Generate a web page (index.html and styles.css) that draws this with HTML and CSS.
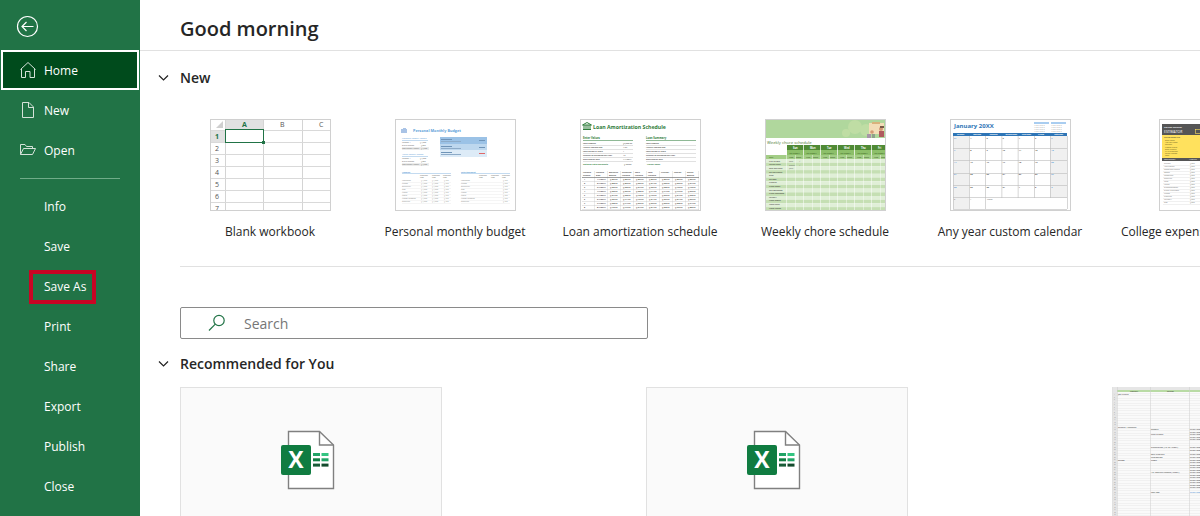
FILE: index.html
```
<!DOCTYPE html>
<html lang="en">
<head>
  <meta charset="UTF-8">
  <meta name="viewport" content="width=device-width, initial-scale=1.0">
  <title>Home</title>
  <link rel="stylesheet" href="styles.css">
</head>
<body>
  <nav class="sidebar">
    <button class="back" aria-label="Back">
      <svg width="22" height="22" viewBox="0 0 22 22" fill="none" stroke="#fff" stroke-width="1.2">
        <circle cx="11.5" cy="11.5" r="10"/>
        <path d="M17.5 11.5H6M10.5 7L6 11.5L10.5 16"/>
      </svg>
    </button>
    <button class="nav-item active">
      <svg width="16" height="18" viewBox="0 0 16 18" fill="none" stroke="#d5e2d9">
        <path d="M.5 8.5L8 1.5L15.5 8.5M1.5 8V16.5H5.5V10.5H10V16.5H14.5V8"/>
      </svg>
      Home
    </button>
    <button class="nav-item">
      <svg width="16" height="18" viewBox="0 0 16 18" fill="none" stroke="#d5e2d9">
        <path d="M2.5 1.5H9L13.5 6V16.5H2.5ZM8.5 1.5V6.5H13.5"/>
      </svg>
      New
    </button>
    <button class="nav-item">
      <svg width="16" height="18" viewBox="0 0 16 18" fill="none" stroke="#d5e2d9">
        <path d="M.5 13.5V3.5H5L6.5 5.5H12.5V7.5M.5 13.5L3.5 7.5H15.5L12.5 13.5Z"/>
      </svg>
      Open
    </button>
    <hr class="nav-line">
    <button class="nav-item text-only">Info</button>
    <button class="nav-item text-only">Save</button>
    <button class="nav-item text-only marked">Save As</button>
    <button class="nav-item text-only">Print</button>
    <button class="nav-item text-only">Share</button>
    <button class="nav-item text-only">Export</button>
    <button class="nav-item text-only">Publish</button>
    <button class="nav-item text-only">Close</button>
  </nav>

  <main class="content">
    <header class="top">
      <h1>Good morning</h1>
    </header>

    <section class="new-section">
      <h2>
        <svg width="12" height="8" viewBox="0 0 12 8" fill="none" stroke="#222" stroke-width="1.2"><path d="M1 1.5L5.5 6L10 1.5"/></svg>
        New
      </h2>
      <div class="templates">
        <a class="template" href="#"><svg class="thumb" id="blank" viewBox="0 0 121 92"></svg>Blank workbook</a>
        <a class="template" href="#"><svg class="thumb" id="budget" viewBox="0 0 121 92"></svg>Personal monthly budget</a>
        <a class="template" href="#"><svg class="thumb" id="loan" viewBox="0 0 121 92"></svg>Loan amortization schedule</a>
        <a class="template" href="#"><svg class="thumb" id="chore" viewBox="0 0 121 92"></svg>Weekly chore schedule</a>
        <a class="template" href="#"><svg class="thumb" id="calendar" viewBox="0 0 121 92"></svg>Any year custom calendar</a>
        <a class="template" href="#"><svg class="thumb" id="college" viewBox="0 0 121 92"></svg>College expense estimator</a>
      </div>
    </section>

    <label class="search">
      <svg width="18" height="18" viewBox="0 0 18 18" fill="none" stroke="#217346" stroke-width="1.2">
        <circle cx="11" cy="6.5" r="5.2"/>
        <path d="M7.3 10.2L1 16.5"/>
      </svg>
      <input type="text" placeholder="Search" aria-label="Search">
    </label>

    <section class="recommended">
      <h2>
        <svg width="12" height="8" viewBox="0 0 12 8" fill="none" stroke="#222" stroke-width="1.2"><path d="M1 1.5L5.5 6L10 1.5"/></svg>
        Recommended for You
      </h2>
      <div class="cards">
        <a class="card" href="#" aria-label="Workbook">
          <svg class="file-icon" width="54" height="60" viewBox="0 0 54 60"></svg>
        </a>
        <a class="card" href="#" aria-label="Workbook">
          <svg class="file-icon" width="54" height="60" viewBox="0 0 54 60"></svg>
        </a>
        <a class="card" href="#" aria-label="Workbook preview">
          <svg class="sheet" id="sheet" viewBox="0 0 260 146"></svg>
        </a>
      </div>
    </section>
  </main>

  <script src="script.js"></script>
</body>
</html>
```
FILE: styles.css
```
* {
  box-sizing: border-box;
}
body {
  margin: 0;
  height: 100vh;
  display: flex;
  overflow: hidden;
  background: #fff;
  color: #262626;
  font-family: "Open Sans", "Noto Sans", sans-serif;
  font-size: 12px;
}
button {
  border: 0;
  background: none;
  color: inherit;
  font: inherit;
}
a {
  color: inherit;
  text-decoration: none;
}

/* sidebar */
.sidebar {
  flex: 0 0 140px;
  background: #217346;
  color: #fff;
}
.back {
  display: flex;
  height: 50px;
  padding: 15px 16px;
}
.back svg {
  overflow: visible;
}
.nav-item {
  display: flex;
  align-items: center;
  gap: 8px;
  width: 100%;
  height: 40px;
  padding: 0 20px;
  position: relative;
}
.nav-item.active {
  width: calc(100% - 2px);
  margin: 0 1px;
  padding: 0 17px;
  border: 2px solid #fff;
  background: #004b1c;
}
.nav-item.text-only {
  padding-left: 44px;
}
.marked::after {
  content: "";
  box-sizing: border-box;
  position: absolute;
  left: 29px;
  top: 4px;
  width: 67px;
  height: 34px;
  border: 4px solid #c90524;
}
.nav-line {
  height: 1px;
  margin: 8px 20px 7px;
  border: 0;
  background: #70ac88;
}

/* main area */
.content {
  flex: 1;
  min-width: 0;
  overflow: hidden;
}
.top {
  height: 51px;
  padding-left: 40px;
  display: flex;
  align-items: center;
  border-bottom: 1px solid #e1e1e1;
}
h1 {
  margin: 0;
  padding-top: 8px;
  font-size: 20px;
  line-height: 28px;
  font-weight: 600;
}
h2 {
  display: flex;
  align-items: center;
  gap: 10px;
  margin: 0 0 0 -22px;
  font-size: 14px;
  line-height: 20px;
  font-weight: 600;
}
.new-section {
  margin-left: 40px;
  padding: 17px 0 26px;
  border-bottom: 1px solid #e1e1e1;
}
.templates {
  display: flex;
  gap: 5px;
  margin-top: 31px;
}
.template {
  flex: 0 0 180px;
  display: flex;
  flex-direction: column;
  align-items: center;
  gap: 13px;
  line-height: 16px;
  white-space: nowrap;
}
.thumb {
  width: 121px;
  height: 92px;
}
.search {
  display: flex;
  align-items: center;
  gap: 18px;
  width: 468px;
  max-width: 90%;
  height: 32px;
  margin: 40px 0 15px 40px;
  padding-left: 27px;
  border: 1px solid #8a8a8a;
  border-radius: 2px;
}
.search input {
  flex: 1;
  border: 0;
  outline: 0;
  padding: 0;
  background: none;
  font: inherit;
  font-size: 14px;
}
.search input::placeholder {
  color: #767676;
}
.recommended {
  margin-left: 40px;
}
.cards {
  display: flex;
  gap: 204px;
  margin-top: 13px;
}
.card {
  flex: 0 0 262px;
  height: 146px;
  display: flex;
  align-items: center;
  justify-content: center;
  border: 1px solid #e1e1e1;
  background: #fafafa;
}
.file-icon {
  margin-right: 6px;
}
.sheet {
  width: 260px;
  height: 146px;
}
```
FILE: script.js
```
const rect = (x, y, w, h, fill) =>
  `<rect x="${x}" y="${y}" width="${w}" height="${h}" fill="${fill}"/>`;

const text = (x, y, size, str, fill = '#666', weight = 400) =>
  `<text x="${x}" y="${y}" font-size="${size}" fill="${fill}" font-weight="${weight}">${str}</text>`;

const frame = '<rect x=".5" y=".5" width="120" height="91" fill="none" stroke="#d0d0d0"/>';

function draw(id, parts) {
  document.getElementById(id).innerHTML = parts.join('');
}

// Blank workbook
function blank() {
  const p = [rect(0, 0, 121, 92, '#fff'), rect(15, 0, 39, 11, '#e1e1e1'), rect(0, 11, 15, 12, '#e1e1e1')];
  p.push('<path d="M13 2V9H6Z" fill="#cfcfcf"/>');
  [15, 53, 92].forEach(x => p.push(rect(x, 0, 1, 92, '#d4d4d4')));
  for (let i = 0; i < 7; i++) {
    p.push(rect(0, 11 + i * 12, 121, 1, '#d9d9d9'));
    p.push(text(5, 20 + i * 12, 7, i + 1, i ? '#555' : '#217346', i ? 400 : 700));
  }
  p.push(text(32, 8, 7, 'A', '#217346', 700), text(70, 8, 7, 'B', '#555'), text(109, 8, 7, 'C', '#555'));
  p.push('<rect x="15.5" y="10.5" width="38" height="13" fill="#fff" stroke="#217346"/>', rect(52, 22, 3, 3, '#217346'));
  p.push(frame);
  draw('blank', p);
}

// Personal monthly budget
function budget() {
  const p = [rect(0, 0, 121, 92, '#fff'), rect(6, 10, 6, 4, '#a9c3e6'), rect(8, 9, 3, 1, '#a9c3e6')];
  p.push(text(18, 13, 3.8, 'Personal Monthly Budget', '#5f9fd8', 700));
  p.push(rect(45, 18, 47, 7, '#9bc2e6'), rect(45, 25, 47, 6, '#bdd7ee'), rect(45, 31, 47, 7, '#ddebf7'));
  [20, 27, 33].forEach((y, i) => {
    p.push(rect(46, y, 11, 1, '#6f94b8'), rect(46, y + 2, 20, 1, '#8dabc8'));
    p.push(rect(84, y + 1, 6, 1, i === 2 ? '#e06868' : '#6f94b8'));
  });
  [[19, 'Projected Monthly Income'], [35, 'Actual Monthly Income']].forEach(([y, str]) => {
    p.push(text(7, y + 1, 2, str, '#5b9bd5'), rect(7, y + 2, 26, 1, '#c4dbf0'));
    p.push(text(7, y + 5, 2, 'Income 1'), text(25, y + 5, 2, '$4,300'));
    p.push(text(7, y + 8, 2, 'Extra income'), text(26, y + 8, 2, '$300'));
    p.push(rect(7, y + 9, 27, 3, '#ececec'), text(7, y + 11, 1.7, 'Total monthly income'), text(26, y + 11, 2, '$4,600'));
  });
  [[7, 'Housing'], [66, 'Entertainment']].forEach(([x, str]) => {
    p.push(text(x, 54, 2, str, '#5b9bd5', 700), rect(x, 54, 49, 1, '#c4dbf0'));
    [18, 30, 41].forEach(dx => p.push(text(x + dx, 57, 1.8, 'Projected'), text(x + dx, 59, 1.8, 'Cost')));
    for (let i = 0; i < 8; i++) {
      const y = 62 + i * 3;
      p.push(rect(x, y + 1, 49, .3, '#ddd'));
      p.push(text(x, y, 2, ['Mortgage', 'Phone', 'Electricity', 'Gas', 'Water', 'Cable', 'Waste removal', 'Supplies'][i], '#888'));
      if (x < 60) p.push(text(x + 19, y, 2, '$1,000', '#999'), text(x + 30, y, 2, '$1,000', '#999'));
      p.push(text(x + 42, y, 2, '$100', '#999'));
    }
  });
  p.push(frame);
  draw('budget', p);
}

// Loan amortization schedule
function loan() {
  const green = '#2f7d3b';
  const p = [rect(0, 0, 121, 92, '#fff')];
  p.push('<path d="M2.5 6L7 3.5L11.5 6ZM3 10.5H11M4 6V10M6 6V10M8 6V10M10 6V10" fill="none" stroke="#2f7d3b"/>');
  p.push(text(13, 10, 5.2, 'Loan Amortization Schedule', green, 700));
  [[3, 'Enter Values'], [66, 'Loan Summary']].forEach(([x, str]) => {
    p.push(text(x, 20, 2.7, str, green, 700), rect(x, 21, 50, 1, '#8fb996'));
    ['Loan amount', 'Annual interest rate', 'Loan period in years', 'Number of payments per year', 'Start date of loan'].forEach((row, i) => {
      p.push(text(x, 25 + i * 4, 2, row, '#333', 600), rect(x, 26 + i * 4, 50, .3, '#999'));
      if (x < 60) p.push(text(x + 40, 25 + i * 4, 2, ['$5,000.00', '4.5%', '1', '12', '1/1/20XX'][i], '#333'));
    });
  });
  p.push(text(3, 46, 2, 'Optional extra payments', green, 700), text(44, 46, 2, '$100.00', '#333'));
  p.push(text(67, 46, 2, 'Lender name', green, 700));
  for (let c = 0; c < 9; c++) {
    const x = 3 + c * 13;
    p.push(text(x, 54, 1.9, ['Payment', 'Payment', 'Beginning', 'Scheduled', 'Extra', 'Total', 'Principal', 'Interest', 'Ending'][c], '#333', 600));
    p.push(text(x, 57, 1.9, ['Number', 'Date', 'Balance', 'Payment', 'Payment', 'Payment', '', '', 'Balance'][c], '#333', 600));
    p.push(rect(x + 11, 52, .3, 39, '#bbb'));
    for (let r = 0; r < 8; r++) {
      const value = c === 0 ? r + 1 : c === 1 ? (r + 1) + '/1/20XX' : '$' + (426 + r * c) + '.79';
      p.push(text(x + 1, 61 + r * 4, 2, value, '#222', 600));
      if (c === 0) p.push(rect(2, 62 + r * 4, 117, .3, '#aaa'));
    }
  }
  p.push(rect(2, 58, 117, .7, '#777'), frame);
  draw('loan', p);
}

// Weekly chore schedule
function chore() {
  const p = [rect(0, 0, 121, 92, '#fff'), rect(1, 1, 119, 18, '#b0d79d')];
  p.push('<g fill="#bfdda4"><circle cx="90" cy="8" r="7"/><circle cx="81" cy="14" r="4"/><circle cx="101" cy="11" r="6"/></g>');
  p.push(rect(104, 4, 15, 11, '#f3ddb7'), rect(107, 3, 8, 2, '#d9b27c'));
  p.push('<g fill="#d39976"><circle cx="107" cy="13" r="1.8"/><circle cx="116" cy="10" r="2"/></g>');
  p.push(rect(102, 15, 4, 4, '#a795a8'), rect(107, 15, 3, 4, '#8fa08c'), rect(114, 12, 5, 6, '#b05a5e'), rect(115, 7, 4, 2, '#7a5a48'));
  p.push(text(2, 25, 4.2, 'Weekly chore schedule', '#4f7d35', 400));
  for (let r = 0; r < 14; r++) {
    p.push(rect(1, 40 + r * 3.7, 119, 3.7, r % 2 ? '#c5dfb3' : '#e0efd7'));
  }
  p.push(rect(1, 36, 119, 4, '#a3cd86'), text(4, 39, 2, 'Task', '#345a20'));
  ['Sun', 'Mon', 'Tue', 'Wed', 'Thu', 'Fri'].forEach((day, i) => {
    const x = 22 + i * 17;
    p.push(rect(x, 26, 16.5, 5, '#4f8a35'), rect(x, 31, 16.5, 5, '#8cbf69'));
    p.push(text(x + 6, 29.5, 2.5, day, '#fff', 700), text(x + 2, 34.5, 2, '10/15/20XX', '#234612'));
    p.push(text(x + 2, 39, 2, 'Who', '#234612'), text(x + 9, 39, 2, 'Done', '#234612'));
    p.push(rect(x - .5, 26, .5, 66, '#fff'), rect(x + 8, 36, .4, 56, '#fff'));
  });
  ['Pick up toys', 'Collect trash', 'Take out trash', 'Do vacuuming', 'Dust', 'Do mop', 'Cleanup', 'Clean floors', 'Do bathrooms', 'Clean bathroom', 'Laundry', 'Wash dishes', 'Make lunch', 'Water plants'].forEach((row, i) => {
    p.push(text(4, 42.7 + i * 3.6, 2, row, '#222'));
  });
  p.push(text(24, 43, 2, 'Tom'), text(34, 43, 2, '✓'), text(24, 46.5, 2, 'Susan'), text(34, 46.5, 2, '✓'), text(24, 50, 2, 'John'));
  p.push(frame);
  draw('chore', p);
}

// Any year custom calendar
function calendar() {
  const p = [rect(0, 0, 121, 92, '#fff'), text(4, 9, 6, 'January 20XX', '#2e75b6', 700)];
  [84, 101].forEach(x => {
    p.push(rect(x, 3, 15, 2, '#a9cdf0'));
    for (let r = 0; r < 4; r++) p.push(text(x, 7 + r * 2, 1.9, '1 2 3 4 5 6 7', '#888'));
  });
  p.push(rect(3, 17, 16, 73, '#f0f0f0'), rect(100, 17, 17, 62, '#f0f0f0'), rect(3, 14, 114, 3, '#2e75b6'));
  ['Sunday', 'Monday', 'Tuesday', 'Wednesday', 'Thursday', 'Friday', 'Saturday'].forEach((day, c) => {
    const x = 3 + c * 16.2;
    p.push(text(x + 4, 16.3, 2, day, '#fff', 700), rect(x, 17, .6, c < 3 ? 73 : 62, '#bbb'));
    for (let r = 0; r < 5; r++) {
      const n = r * 7 + c;
      p.push(text(x + 1, 19.5 + r * 12.3, 2.2, n === 0 ? 31 : n > 31 ? n - 31 : n, c % 6 ? '#333' : '#4a8fd0', 600));
    }
  });
  [29, 41, 54, 66, 78, 90].forEach(y => p.push(rect(3, y, 114, .6, '#bbb')));
  p.push(text(4, 81, 2, '3'), text(20, 81, 2, '4'), text(37, 81, 2, 'Notes'), rect(117, 17, .6, 73, '#bbb'), frame);
  draw('calendar', p);
}

// College expenses, a page that runs past the window edge
function college() {
  const p = [rect(24, 0, 73, 92, '#fff'), '<rect x="24.5" y=".5" width="72" height="91" fill="none" stroke="#d0d0d0"/>'];
  p.push(rect(27, 5, 67, 11, '#555'), rect(27, 16, 67, 23, '#ffe15d'), rect(27, 39, 67, 3, '#555'));
  p.push(text(29, 9, 2.3, 'College Expense', '#fff', 600), text(29, 14, 3.4, 'ESTIMATOR', '#fff'));
  p.push('<rect x="60.5" y="10.5" width="14" height="4" fill="#555" stroke="#ffe15d" stroke-width=".6"/>');
  p.push(text(29, 18.5, 1.7, 'TIPS TO USING THIS', '#333', 600), text(29, 41, 1.8, 'DESCRIPTION', '#fff'), text(54, 41, 1.8, 'AMOUNT', '#fff'));
  ['Enter dates', 'Add your costs', 'Rename', 'Choose a term', 'Enter funding', 'Fill in expenses', 'Select a school', 'Total'].forEach((row, i) => {
    p.push(text(30, 22 + i * 2.2, 1.8, row, '#665a20'));
  });
  ['Tuition', 'Application', 'Room and board', 'Books', 'Computer', 'Supplies', 'Fees', 'Meals', 'Transportation', 'Travel expenses', 'Phone', 'Clothing', 'Laundry', 'Gas'].forEach((row, i) => {
    p.push(text(29, 45 + i * 3, 2, row, '#777'), text(55, 45 + i * 3, 2, '$250', '#777'), rect(28, 46 + i * 3, 65, .3, '#ccc'));
  });
  draw('college', p);
}

// Sheet preview on the third card
function sheet() {
  const p = [rect(0, 0, 260, 146, '#fafafa'), rect(0, 0, 260, 3, '#e6e6e6'), rect(0, 0, 4, 146, '#e6e6e6'), rect(4, 3, 256, 2, '#b9dba5')];
  for (let y = 6; y < 146; y += 2.5) {
    p.push(rect(0, y, 260, .3, '#ddd'), text(1, y + 2, 1.5, Math.round((y - 3) / 2.5), '#888'));
  }
  [4, 37, 76, 150].forEach(x => p.push(rect(x, 0, .5, 146, '#ccc')));
  p.push(text(17, 5, 2, 'Category', '#333'), text(54, 5, 2, 'Section', '#333'));
  [[5, 7.5, 'Job related'], [5, 40.5, 'General / Technical'], [38, 43, 'Reports'], [38, 48, 'Case studies'], [38, 61, 'Subscription ("IT" or "Legal")'],
    [38, 68, 'Best Practices'], [38, 71, 'Information'], [5, 73.5, 'Design'], [38, 73.5, 'Pages'], [38, 86, '"IT" Contract/Upload ("Legal")'], [38, 106, 'Cost tool']]
    .forEach(([x, y, str]) => p.push(text(x, y, 2.1, str, '#222')));
  [43, 45.5, 48, 50.5, 53, 61, 63.5, 68, 71, 73.5, 76, 78.5, 81, 83.5, 86, 88.5, 91, 93.5, 96, 98.5, 101, 106]
    .forEach(y => p.push(text(77, y, 2.1, 'https://www', y === 106 ? '#2a7ad0' : '#222')));
  draw('sheet', p);
}

function fileIcon() {
  const cells = [['#21a366', '#33c481'], ['#107c41', '#21a366'], ['#185c37', '#134a2c']];
  return '<path d="M7.5 1.5H38.5L52.5 15V58.5H7.5Z" fill="#fff" stroke="#808080" stroke-width="1.4"/>' +
    '<path d="M38.5 1.5V15H52.5" fill="none" stroke="#808080" stroke-width="1.4"/>' +
    cells.map((row, i) => rect(32, 23 + i * 5.3, 7, 3, row[0]) + rect(40.5, 23 + i * 5.3, 7, 3, row[1])).join('') +
    '<rect x="0" y="15" width="30" height="30" rx="2" fill="#107c41"/>' +
    '<text x="15" y="38" font-size="23" font-weight="700" fill="#fff" text-anchor="middle">X</text>';
}

blank();
budget();
loan();
chore();
calendar();
college();
sheet();
document.querySelectorAll('.file-icon').forEach(icon => icon.innerHTML = fileIcon());
```
